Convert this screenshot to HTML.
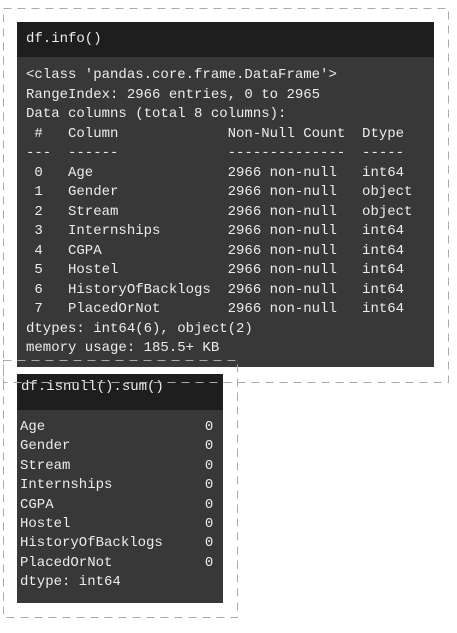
<!DOCTYPE html>
<html><head><meta charset="utf-8"><style>
body{margin:0;width:457px;height:633px;background:#fff;position:relative;overflow:hidden;font-family:"Liberation Mono",monospace;}
.box{position:absolute;background:#383838;color:#ececec;}
.hd{background:#1e1e1e;color:#ececec;}
pre{margin:0;font-family:"Liberation Mono",monospace;font-size:14px;line-height:19.5px;white-space:pre;}
svg{position:absolute;left:0;top:0;}
</style></head><body>
<div class="box" style="left:17px;top:22px;width:417px;height:345px">
 <div class="hd" style="height:35px"><pre style="padding:8px 0 0 9px">df.info()</pre></div>
 <pre style="padding:9px 0 0 9px">&lt;class 'pandas.core.frame.DataFrame'&gt;
RangeIndex: 2966 entries, 0 to 2965
Data columns (total 8 columns):
 #   Column             Non-Null Count  Dtype 
---  ------             --------------  ----- 
 0   Age                2966 non-null   int64 
 1   Gender             2966 non-null   object
 2   Stream             2966 non-null   object
 3   Internships        2966 non-null   int64 
 4   CGPA               2966 non-null   int64 
 5   Hostel             2966 non-null   int64 
 6   HistoryOfBacklogs  2966 non-null   int64 
 7   PlacedOrNot        2966 non-null   int64 
dtypes: int64(6), object(2)
memory usage: 185.5+ KB</pre>
</div>
<div class="box" style="left:17px;top:374px;width:206px;height:229px">
 <div class="hd" style="height:36px"><pre style="padding:4px 0 0 4px">df.isnull().sum()</pre></div>
 <pre style="padding:8px 0 0 3px;line-height:19.4px">Age                   0
Gender                0
Stream                0
Internships           0
CGPA                  0
Hostel                0
HistoryOfBacklogs     0
PlacedOrNot           0
dtype: int64</pre>
</div>
<svg width="457" height="633" fill="none" stroke="#aaa" stroke-width="1" stroke-dasharray="8 6">
<rect x="3.5" y="8.5" width="445" height="374"/>
<rect x="3.5" y="360.5" width="234" height="257"/>
</svg>
</body></html>
